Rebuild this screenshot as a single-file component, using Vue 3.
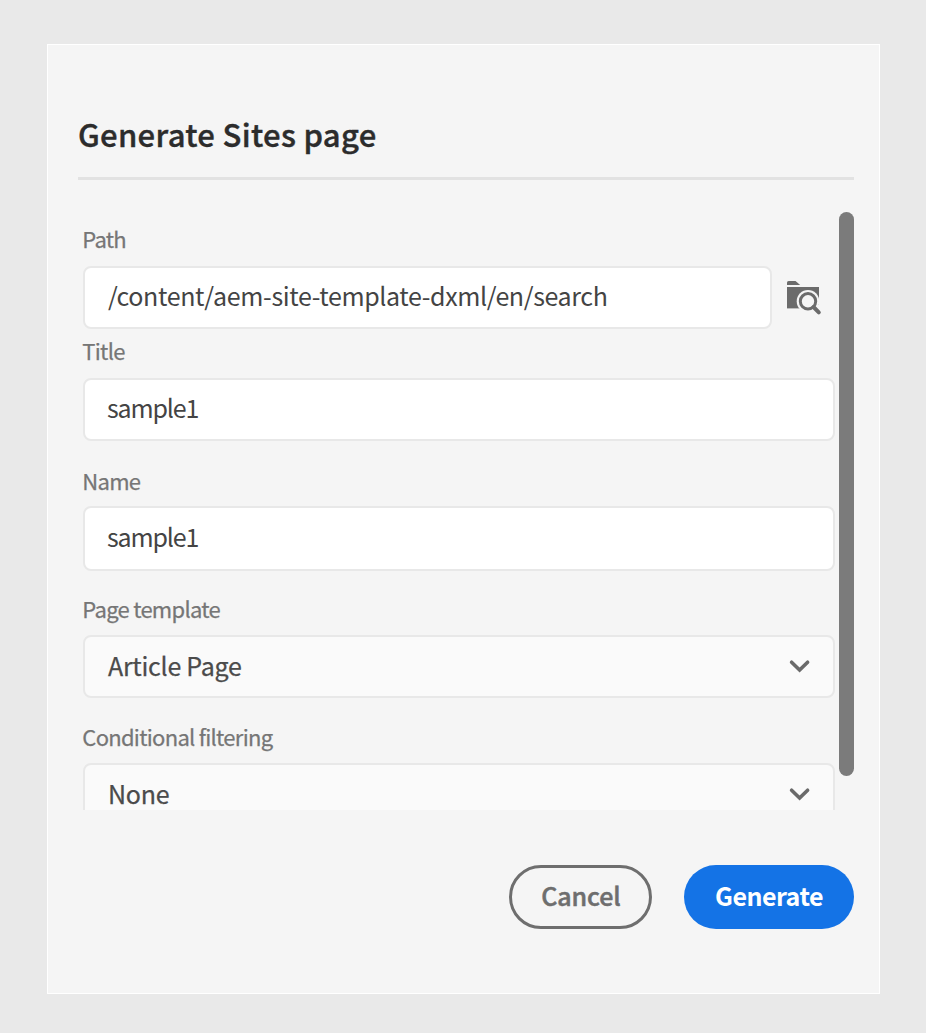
<script setup>
const fields = [
  { id: 'path', label: 'Path', value: '/content/aem-site-template-dxml/en/search', kind: 'path' },
  { id: 'title', label: 'Title', value: 'sample1', kind: 'text' },
  { id: 'name', label: 'Name', value: 'sample1', kind: 'text' },
  { id: 'template', label: 'Page template', value: 'Article Page', kind: 'select' },
  { id: 'filter', label: 'Conditional filtering', value: 'None', kind: 'select' },
]
</script>

<template>
  <main class="page">
    <section class="dialog">
      <h1 class="heading"><span>Generate Sites page</span></h1>
      <div class="body">
        <form class="fields">
          <div v-for="f in fields" :key="f.id" class="field" :class="'field-' + f.id">
            <div class="label"><span>{{ f.label }}</span></div>
            <div class="row">
              <div class="control" :class="f.kind">
                <span class="value">{{ f.value }}</span>
                <svg v-if="f.kind === 'select'" class="chevron" width="22" height="14" viewBox="0 0 22 14">
                  <path d="M2.6 3.2 L10.6 11 L18.6 3.2" fill="none" stroke="#6a6a6a" stroke-width="3.6" stroke-linecap="round" />
                </svg>
              </div>
              <svg v-if="f.kind === 'path'" class="browse" width="36" height="36" viewBox="0 0 36 36">
                <path d="M1 5V2.6Q1 1 2.6 1H9.5L14.2 5Z" fill="#6b6b6b" />
                <path d="M1 7H33V28.4H1Z" fill="#6b6b6b" />
                <circle cx="22" cy="21.3" r="11.3" fill="#f5f5f5" />
                <path d="M28 25H36V36H28Z" fill="#f5f5f5" />
                <circle cx="22" cy="21.3" r="7.7" fill="none" stroke="#6b6b6b" stroke-width="3" />
                <path d="M27.5 27L32.8 32.3" stroke="#6b6b6b" stroke-width="4" stroke-linecap="round" />
              </svg>
            </div>
          </div>
        </form>
        <div class="thumb"></div>
      </div>
      <footer class="actions">
        <button class="btn cancel" type="button"><span>Cancel</span></button>
        <button class="btn generate" type="button"><span>Generate</span></button>
      </footer>
    </section>
  </main>
</template>

<style>
body {
  margin: 0;
  background: #e9e9e9;
}
</style>

<style scoped>
.page {
  box-sizing: border-box;
  height: 1033px;
  padding: 44px 46px 39px 47px;
  background: #e9e9e9;
  font-family: "Noto Sans CJK SC", "Noto Sans", sans-serif;
}
.dialog {
  box-sizing: border-box;
  height: 950px;
  width: 833px;
  padding: 62px 25px 0 30px;
  border: 1px solid #fff;
  background: #f5f5f5;
}
.heading {
  box-sizing: border-box;
  height: 73px;
  margin: 0;
  border-bottom: 3px solid #e2e2e2;
  font-size: 31px;
  font-weight: 500;
  line-height: 53px;
  color: #2c2c2c;
  letter-spacing: 0.33px;
  -webkit-text-stroke: 0.4px #2c2c2c;
  white-space: nowrap;
}
.body {
  display: flex;
  justify-content: space-between;
  height: 598px;
  margin-top: 32px;
  overflow: hidden;
}
.fields {
  width: 752px;
  margin-left: 5px;
}
.label {
  display: flex;
  align-items: flex-end;
  box-sizing: border-box;
  height: 65px;
  padding-bottom: 12px;
  font-size: 22px;
  line-height: 30px;
  letter-spacing: -0.72px;
  color: #767676;
  -webkit-text-stroke: 0.25px #767676;
}
.label span { margin-left: -0.7px; }
.field-path .label { height: 54px; padding-bottom: 13px; }
.field-title .label { height: 49px; padding-bottom: 13px; }
.field-name .label { padding-bottom: 11px; }
.field-template .label { height: 64px; }
.row {
  display: flex;
  align-items: center;
  gap: 14px;
}
.control {
  box-sizing: border-box;
  display: flex;
  align-items: center;
  justify-content: space-between;
  width: 752px;
  height: 63px;
  padding: 0 22px 0 23px;
  border: 2px solid #e8e8e8;
  border-radius: 8px;
  background: #fff;
  font-size: 25px;
  line-height: 36px;
  color: #444;
  white-space: nowrap;
}
.value { margin-bottom: 6px; }
.field-name .control { height: 65px; }
.control.path {
  width: 689px;
  letter-spacing: -0.37px;
}
.control.text {
  padding-left: 22px;
  letter-spacing: -1.15px;
}
.control.select {
  background: #fafafa;
  color: #4b4b4b;
  letter-spacing: -0.27px;
  -webkit-text-stroke: 0.25px #4b4b4b;
}
.control.select .value { margin-bottom: 3px; }
.chevron {
  flex: none;
  margin-bottom: 1px;
}
.browse { flex: none; }
.thumb {
  width: 15px;
  height: 564px;
  border-radius: 8px;
  background: #7b7b7b;
}
.actions {
  display: flex;
  justify-content: flex-end;
  gap: 32px;
  margin-top: 55px;
}
.btn {
  box-sizing: border-box;
  height: 64px;
  padding: 0 0 5px;
  border: 0;
  border-radius: 32px;
  font-family: inherit;
  font-size: 25px;
  line-height: 36px;
}
.cancel {
  width: 143px;
  padding-left: 1px;
  border: 3px solid #6e6e6e;
  background: transparent;
  color: #6e6e6e;
  font-weight: 500;
  letter-spacing: -0.1px;
  -webkit-text-stroke: 0.5px #6e6e6e;
}
.generate {
  width: 170px;
  background: #1473e6;
  color: #fff;
  font-weight: 700;
  letter-spacing: -0.5px;
}
</style>
